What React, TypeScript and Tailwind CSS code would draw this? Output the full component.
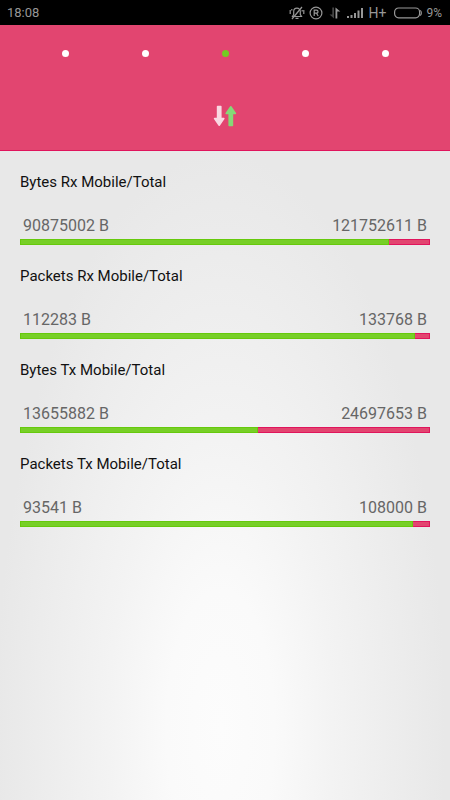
interface Usage {
  label: string;
  mobile: string;
  total: string;
  percent: number;
}

const usages: Usage[] = [
  { label: 'Bytes Rx Mobile/Total', mobile: '90875002 B', total: '121752611 B', percent: 90.5 },
  { label: 'Packets Rx Mobile/Total', mobile: '112283 B', total: '133768 B', percent: 96.8 },
  { label: 'Bytes Tx Mobile/Total', mobile: '13655882 B', total: '24697653 B', percent: 58.4 },
  { label: 'Packets Tx Mobile/Total', mobile: '93541 B', total: '108000 B', percent: 96.3 },
];

const pages = ['Battery', 'Memory', 'Network', 'Storage', 'Device'];

function StatusBar() {
  return (
    <div className="flex h-[25px] items-center justify-between bg-black pl-[7px] pr-2 text-[#979797]">
      <span className="text-[13px] leading-4">18:08</span>
      <div className="flex items-center">
        <svg className="mr-1 h-4 w-4" viewBox="0 0 16 16" fill="none" stroke="currentColor" strokeWidth="1.2">
          <path d="M3.5 11.5h9L11.3 9.500V6.500a3.300 3.300 0 0 0-6.600 0v3zM6.500 13.300h3" />
          <path d="M13 2L3 14M1.200 5v4M14.800 5v4M2.800 4v1.500M13.200 5v1.500" />
        </svg>
        <svg className="mr-1.5 h-3.5 w-3.5" viewBox="0 0 14 14" fill="none" stroke="currentColor" strokeWidth="1.2">
          <circle cx="7" cy="7" r="5.900" />
          <path d="M5.200 10V4.200h2.300a1.500 1.500 0 0 1 0 3H5.200M7.500 7.200L9.200 10" />
        </svg>
        <svg className="mr-1.5 h-3 w-3" viewBox="0 0 12 12">
          <path d="M3.300 .500h1.700v11L.500 7.500h2.800z" fill="#444" />
          <path d="M6.500 11.500V.500l4.800 4H8.300v7z" fill="currentColor" />
        </svg>
        <svg className="mr-1.5 h-3 w-4" viewBox="0 0 16 12" fill="currentColor">
          <path d="M0 9h2v2H0zM3.500 8h2v3h-2zM7 6h2v5H7zM10.500 3.500h2V11h-2zM14 1h2v10h-2z" />
        </svg>
        <span className="mr-2 text-[14px] leading-4">H+</span>
        <svg className="mr-1 h-3 w-7" viewBox="0 0 28 12" fill="none" stroke="currentColor" strokeWidth="1.200">
          <rect x=".600" y="1" width="25" height="9.800" rx="4" />
          <path d="M26 3.500c1.800.500 1.800 4.300 0 4.800" />
        </svg>
        <span className="text-[12px] leading-4">9%</span>
      </div>
    </div>
  );
}

function Header() {
  return (
    <header className="border-b border-[#e0145c] bg-[#e24570] pb-[22px]">
      <nav className="flex justify-around px-[25px] pt-[25px]">
        {pages.map((page) => (
          <button
            key={page}
            aria-label={page}
            className={`h-[7px] w-[7px] rounded-full ${page === 'Network' ? 'bg-[#74cc22]' : 'bg-white'}`}
          />
        ))}
      </nav>
      <svg className="mx-auto mt-[47px] h-6 w-6" viewBox="0 0 24 24" strokeLinejoin="round" strokeWidth="1.6">
        <path d="M4.600 2.600h3.200v12h3L6.200 21.200 1.600 14.600h3z" fill="#f9d8e2" stroke="#f9d8e2" />
        <path d="M16.200 21.400h3.200v-12h3L17.800 2.800l-4.600 6.600h3z" fill="#85d877" stroke="#85d877" />
      </svg>
    </header>
  );
}

function UsageRow({ label, mobile, total, percent }: Usage) {
  return (
    <section>
      <h2 className="text-[15px] leading-5 text-[#111]">{label}</h2>
      <div className="mt-6 flex justify-between px-[3px] text-[16px] leading-5 text-[#666]">
        <span>{mobile}</span>
        <span>{total}</span>
      </div>
      <div className="mt-[3px] flex h-1.5 border border-[#e0145c] bg-[#e24570]">
        <div className="-my-px -ml-px border border-[#66c90c] bg-[#77cf27]" style={{ width: `${percent}%` }} />
      </div>
    </section>
  );
}

export default function App() {
  return (
    <div className="flex min-h-screen flex-col bg-[radial-gradient(50%_72%_at_49%_91%,#fcfcfc,#fafafa_24%,#f3f3f3_50%,#e8e8e8)] font-['Roboto',sans-serif]">
      <StatusBar />
      <Header />
      <main className="flex flex-col gap-[21px] px-5 pt-[21px]">
        {usages.map((usage) => (
          <UsageRow key={usage.label} {...usage} />
        ))}
      </main>
    </div>
  );
}
